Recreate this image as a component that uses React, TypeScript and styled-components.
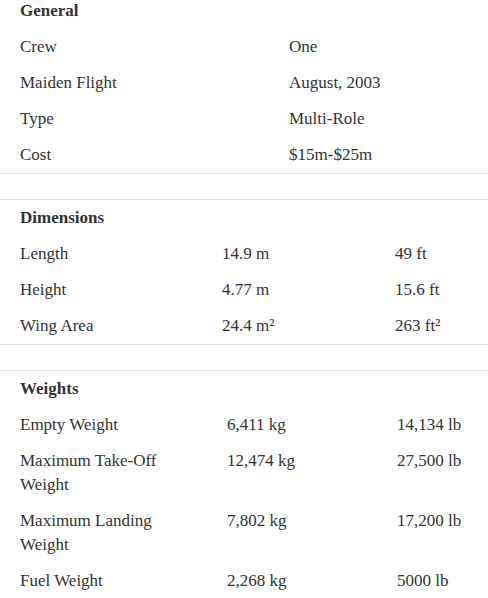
import styled, { createGlobalStyle } from "styled-components";

type Row = string[];

type Section = {
  title: string;
  columns: string;
  rows: Row[];
};

const sections: Section[] = [
  {
    title: "General",
    columns: "269px 1fr",
    rows: [
      ["Crew", "One"],
      ["Maiden Flight", "August, 2003"],
      ["Type", "Multi-Role"],
      ["Cost", "$15m-$25m"],
    ],
  },
  {
    title: "Dimensions",
    columns: "202px 173px 1fr",
    rows: [
      ["Length", "14.9 m", "49 ft"],
      ["Height", "4.77 m", "15.6 ft"],
      ["Wing Area", "24.4 m²", "263 ft²"],
    ],
  },
  {
    title: "Weights",
    columns: "207px 170px 1fr",
    rows: [
      ["Empty Weight", "6,411 kg", "14,134 lb"],
      ["Maximum Take-Off Weight", "12,474 kg", "27,500 lb"],
      ["Maximum Landing Weight", "7,802 kg", "17,200 lb"],
      ["Fuel Weight", "2,268 kg", "5000 lb"],
    ],
  },
];

const App = () => {
  return (
    <>
      <GlobalStyle />
      <Page>
        {sections.map((section) => (
          <SpecBlock key={section.title}>
            <SpecTitle>{section.title}</SpecTitle>
            <SpecGrid $columns={section.columns}>
              {section.rows.map((row) =>
                row.map((cell, i) => (
                  <SpecCell key={row[0] + i} $label={i === 0}>
                    {cell}
                  </SpecCell>
                ))
              )}
            </SpecGrid>
          </SpecBlock>
        ))}
      </Page>
    </>
  );
};

export default App;

const GlobalStyle = createGlobalStyle`
  body {
    margin: 0;
    background: #fff;
    font-family: "Liberation Serif", Georgia, serif;
    color: #333;
  }
`;
const Page = styled.div`
  margin-top: -8px;
  width: 488px;
`;
const SpecBlock = styled.section`
  border-top: 1px solid #e3e3e3;
  border-bottom: 1px solid #e3e3e3;
  margin-bottom: 25px;
`;
const SpecTitle = styled.div`
  padding: 6px 20px;
  font-size: 17px;
  line-height: 24px;
  font-weight: bold;
  color: #333;
`;
const SpecGrid = styled.div<{ $columns: string }>`
  display: grid;
  grid-template-columns: ${(p) => p.$columns};
  padding-left: 20px;
`;
const SpecCell = styled.div<{ $label: boolean }>`
  padding: 6px ${(p) => (p.$label ? "30px" : "0")} 6px 0;
  font-size: 17px;
  line-height: 24px;
  color: #333;
`;
